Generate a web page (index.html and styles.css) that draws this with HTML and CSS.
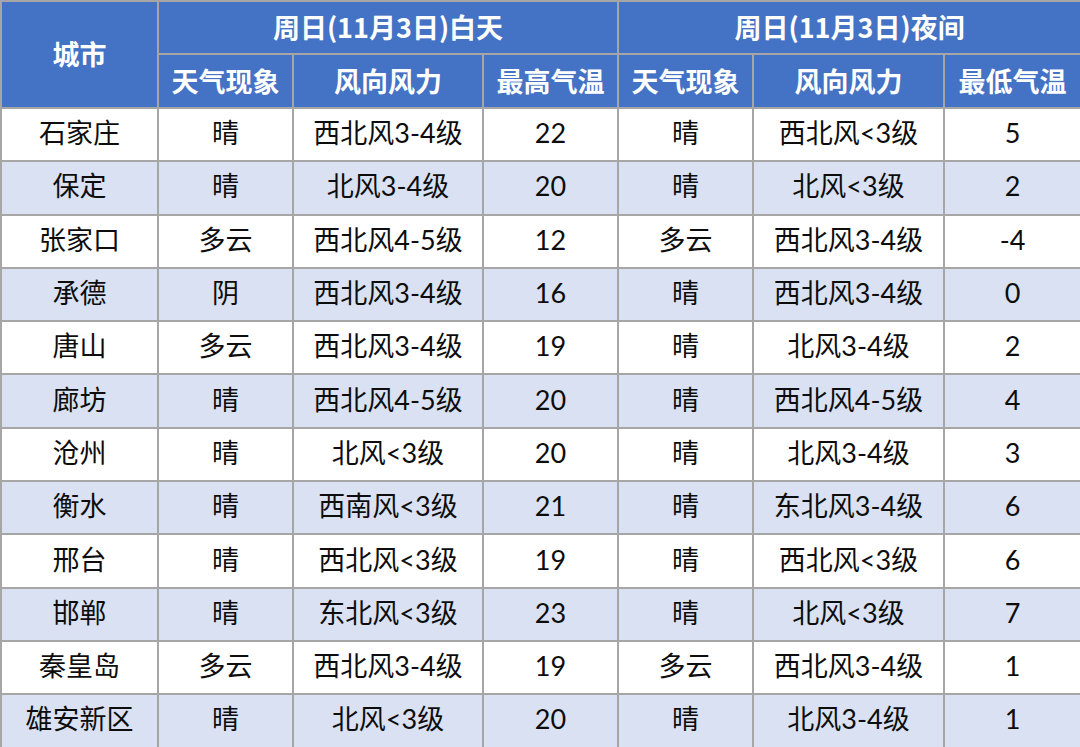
FILE: index.html
```html
<!DOCTYPE html>
<html lang="zh">
<head>
<meta charset="utf-8">
<link rel="stylesheet" href="styles.css">
</head>
<body>
<table class="wx">
<colgroup>
<col class="c-city"><col class="c-n"><col class="c-w1"><col class="c-n"><col class="c-n"><col class="c-w"><col class="c-last">
</colgroup>
<thead>
<tr class="h1"><th rowspan="2">城市</th><th colspan="3">周日(11月3日)白天</th><th colspan="3">周日(11月3日)夜间</th></tr>
<tr class="h2"><th>天气现象</th><th>风向风力</th><th>最高气温</th><th>天气现象</th><th>风向风力</th><th>最低气温</th></tr>
</thead>
<tbody>
<tr><td>石家庄</td><td>晴</td><td>西北风3-4级</td><td>22</td><td>晴</td><td>西北风&lt;3级</td><td>5</td></tr>
<tr class="alt"><td>保定</td><td>晴</td><td>北风3-4级</td><td>20</td><td>晴</td><td>北风&lt;3级</td><td>2</td></tr>
<tr><td>张家口</td><td>多云</td><td>西北风4-5级</td><td>12</td><td>多云</td><td>西北风3-4级</td><td>-4</td></tr>
<tr class="alt"><td>承德</td><td>阴</td><td>西北风3-4级</td><td>16</td><td>晴</td><td>西北风3-4级</td><td>0</td></tr>
<tr><td>唐山</td><td>多云</td><td>西北风3-4级</td><td>19</td><td>晴</td><td>北风3-4级</td><td>2</td></tr>
<tr class="alt"><td>廊坊</td><td>晴</td><td>西北风4-5级</td><td>20</td><td>晴</td><td>西北风4-5级</td><td>4</td></tr>
<tr><td>沧州</td><td>晴</td><td>北风&lt;3级</td><td>20</td><td>晴</td><td>北风3-4级</td><td>3</td></tr>
<tr class="alt"><td>衡水</td><td>晴</td><td>西南风&lt;3级</td><td>21</td><td>晴</td><td>东北风3-4级</td><td>6</td></tr>
<tr><td>邢台</td><td>晴</td><td>西北风&lt;3级</td><td>19</td><td>晴</td><td>西北风&lt;3级</td><td>6</td></tr>
<tr class="alt"><td>邯郸</td><td>晴</td><td>东北风&lt;3级</td><td>23</td><td>晴</td><td>北风&lt;3级</td><td>7</td></tr>
<tr><td>秦皇岛</td><td>多云</td><td>西北风3-4级</td><td>19</td><td>多云</td><td>西北风3-4级</td><td>1</td></tr>
<tr class="alt"><td>雄安新区</td><td>晴</td><td>北风&lt;3级</td><td>20</td><td>晴</td><td>北风3-4级</td><td>1</td></tr>
</tbody>
</table>
</body>
</html>
```
FILE: styles.css
```css
html, body {
  margin: 0;
  padding: 0;
  background: #ffffff;
}
.wx {
  width: 1080px;
  height: 747px;
  border-collapse: collapse;
  table-layout: fixed;
  font-family: Lato, "Noto Sans CJK SC", sans-serif;
  font-size: 27px;
  color: #0d0d0d;
}
.c-city { width: 157px; }
.c-n { width: 135px; }
.c-w1 { width: 190px; }
.c-w { width: 191px; }
.c-last { width: 137px; }
.wx th, .wx td {
  border: 2px solid #a6a6a6;
  text-align: center;
  vertical-align: middle;
  padding: 0 0 4px 0;
  line-height: 1;
}
.wx th {
  background: #4472c4;
  color: #ffffff;
  font-weight: bold;
  font-family: "Noto Sans CJK SC", sans-serif;
  padding-bottom: 2px;
}
.h1 { height: 53px; }
.h2 { height: 54px; }
.wx tbody tr { height: 53.3px; }
.wx tbody tr.alt td { background: #d9e1f2; }
```
